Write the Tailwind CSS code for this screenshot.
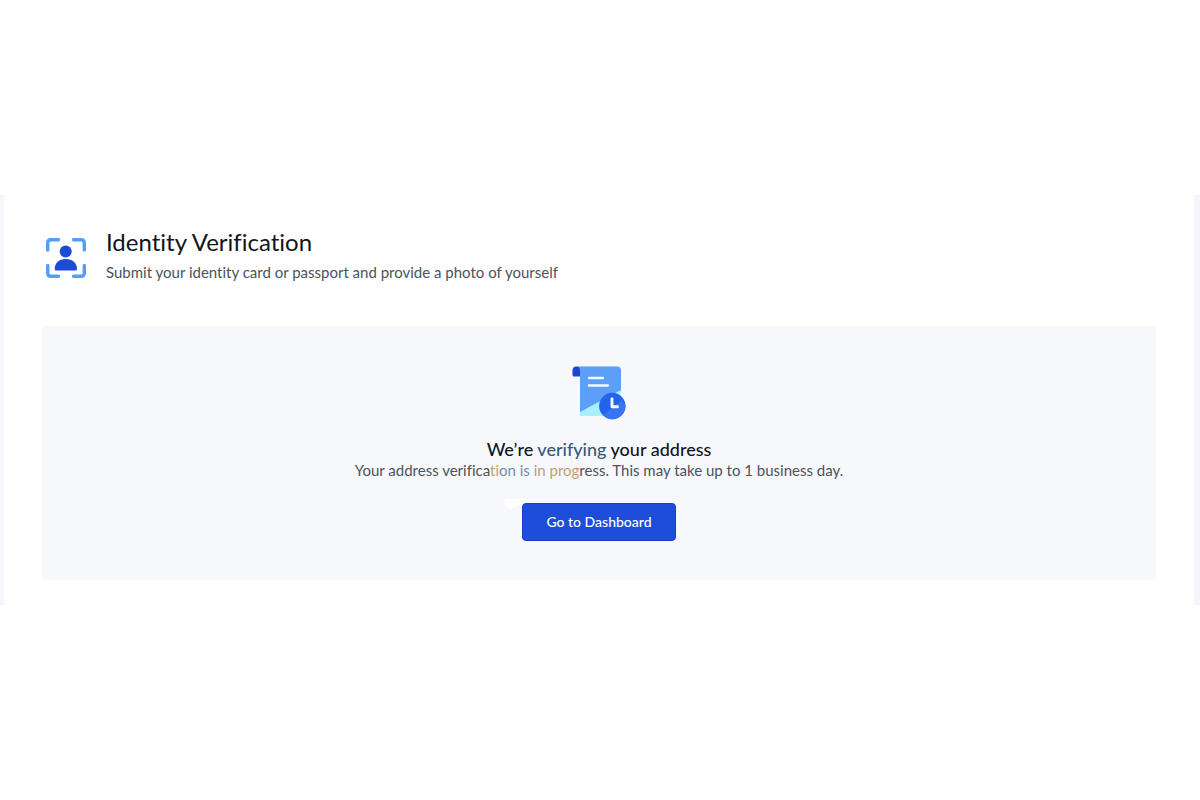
<!DOCTYPE html>
<html lang="en">
<head>
<meta charset="utf-8">
<meta name="viewport" content="width=device-width, initial-scale=1">
<title>Identity Verification</title>
<script src="https://cdn.jsdelivr.net/npm/@tailwindcss/browser@4"></script>
</head>
<body class="flex min-h-screen flex-col justify-center bg-white font-['Lato',sans-serif] [font-variant-ligatures:none]">
<main class="border-l-4 border-r-6 border-[#f5f6fb] pt-[35px] pr-[38px] pb-[25px] pl-[38px]">
  <header class="flex items-center gap-5">
    <svg class="mt-1 ml-1 size-10 shrink-0" viewBox="0 0 40 40" fill="none" aria-hidden="true">
      <path d="M1.700 12V5Q1.700 1.700 5 1.700H12.500M27.500 1.700H35Q38.300 1.700 38.300 5V12M38.300 27.500V35Q38.300 38.300 35 38.300H27.500M12.500 38.300H5Q1.700 38.300 1.700 35V27.500" stroke="#559df8" stroke-width="3.400" stroke-linecap="round"/>
      <circle cx="19.700" cy="13.500" r="6" fill="#1c4bd7"/>
      <path d="M8.700 31C8.700 25 13 21 19.700 21S31 25 31 31Q31 32.500 29.500 32.500H10.200Q8.700 32.500 8.700 31Z" fill="#1c4bd7"/>
    </svg>
    <div>
      <h1 class="text-2xl/6 font-normal text-[#10151b]">Identity Verification</h1>
      <p class="mt-2 text-[15px]/5 text-[#4b535c]">Submit your identity card or passport and provide a photo of yourself</p>
    </div>
  </header>
  <section class="mt-11 flex flex-col items-center rounded bg-[#f6f8fc] px-6 pt-10 pb-[39px] text-center">
    <svg class="h-[54px] w-[54px]" viewBox="0 0 54 54" fill="none" aria-hidden="true">
      <path d="M8 .5H45Q49 .5 49 4.500V50H8Z" fill="#a9efff"/>
      <path d="M5 .5H45Q49 .5 49 4.500V24L8 46V5Z" fill="#5d9ff8"/>
      <path d="M8 10.500H2Q.5 10.500.5 9V4.500Q.5.5 4.500.5Q8 .5 8 4.500Z" fill="#1947d1"/>
      <path d="M17 12H31M17 19.500H36" stroke="#f4faff" stroke-width="2.300" stroke-linecap="round"/>
      <circle cx="40.300" cy="40" r="13.200" fill="#2463eb"/>
      <path d="M31 49.300A13.200 13.200 0 0 0 53.500 39L50 34Z" fill="#3975f3"/>
      <path d="M40 33V40.800H45.500" stroke="#fff" stroke-width="2.900" stroke-linecap="round" stroke-linejoin="round"/>
    </svg>
    <h2 class="mt-[19px] text-lg/5 font-medium text-[#10151b]">We’re <span class="text-[#36597e]">verifying</span> your address</h2>
    <p class="mt-px text-[15px]/5 text-[#4b535c]">Your address verifica<span class="text-[#c9a067]">ti</span><span class="text-[#6f8cac]">on is</span> <span class="text-[#bd9c72]">in</span> <span class="text-[#c4a06e]">prog</span>ress. This may take up to 1 business day.</p>
    <div class="relative mt-[23px]">
      <svg class="absolute -top-1 -left-5 h-3 w-7" viewBox="0 0 28 12" aria-hidden="true"><path d="M1 0H28L7 11Z" fill="#fff"/></svg>
      <button type="button" class="relative block rounded border border-[#1440d0] bg-[#1d4dd9] px-[23px] py-2 text-sm/5 font-medium text-white">Go to Dashboard</button>
    </div>
  </section>
</main>
</body>
</html>
